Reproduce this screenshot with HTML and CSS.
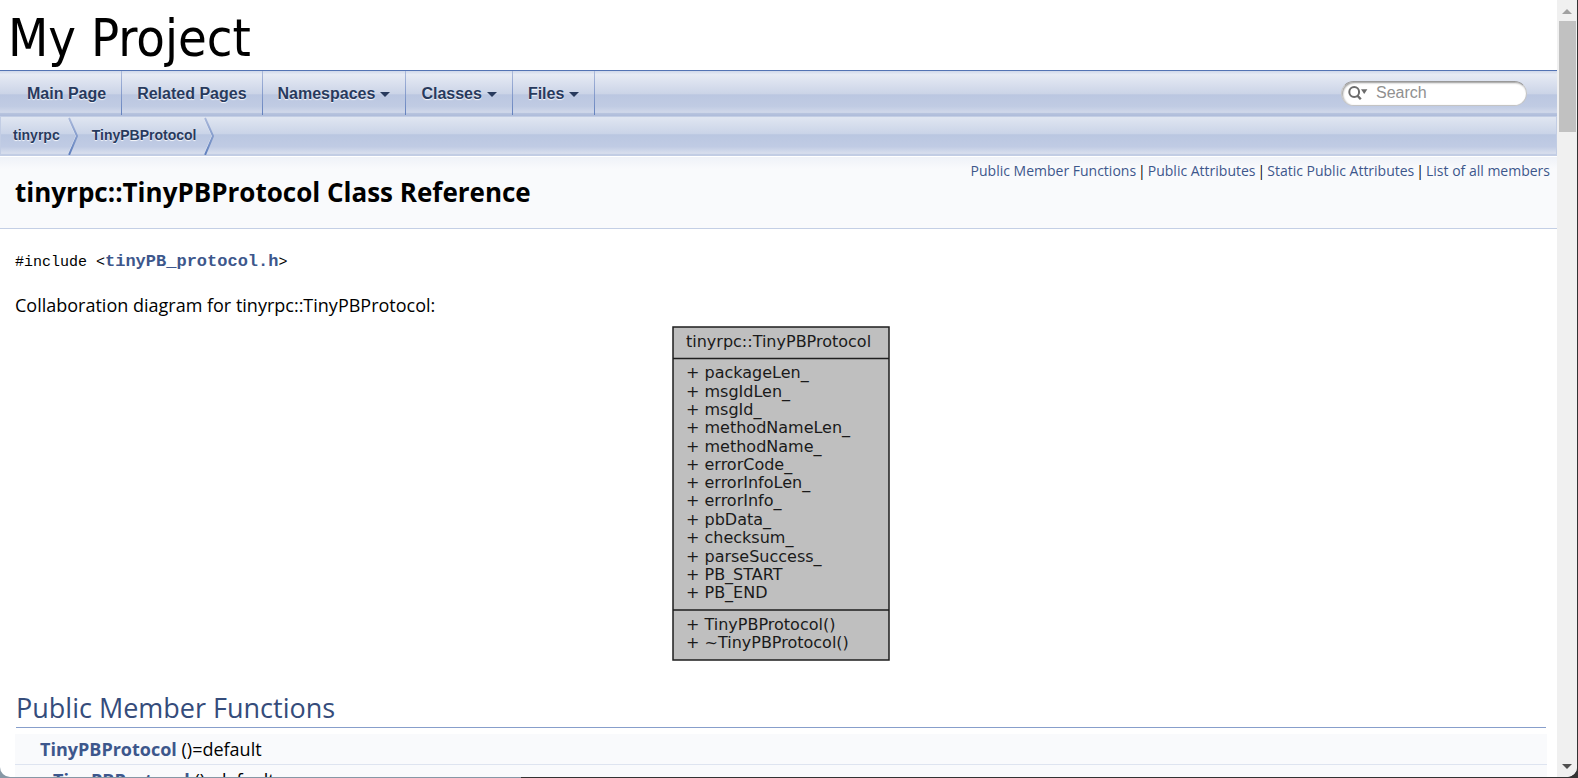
FILE: index.html
```html
<!DOCTYPE html>
<html lang="en">
<head>
<meta charset="utf-8">
<title>My Project: tinyrpc::TinyPBProtocol Class Reference</title>
<link rel="stylesheet" href="styles.css">
</head>
<body>
<div class="window">
  <div class="page">
    <header class="titlearea">My Project</header>
    <nav class="menu">
      <ul class="menu-items">
        <li><a href="#">Main Page</a></li>
        <li><a href="#">Related Pages</a></li>
        <li><a href="#">Namespaces<span class="arrow"></span></a></li>
        <li><a href="#">Classes<span class="arrow"></span></a></li>
        <li><a href="#">Files<span class="arrow"></span></a></li>
      </ul>
      <label class="search">
        <svg width="20" height="16" viewBox="0 0 20 16" aria-hidden="true"><circle cx="6.200" cy="7" r="4.900" fill="none" stroke="#6b6b6b" stroke-width="2"/><path d="M9.500 10.700l3.300 3.600" stroke="#6b6b6b" stroke-width="2.400"/><path d="M13 4.300h6.400l-3.200 4.600z" fill="#6b6b6b"/></svg>
        <input type="text" placeholder="Search" aria-label="Search">
      </label>
    </nav>
    <nav class="navpath">
      <a href="#">tinyrpc</a>
      <svg class="sep" width="10" height="38" viewBox="0 0 10 38" aria-hidden="true"><defs><linearGradient id="g" x1="0" y1="0" x2="0" y2="1"><stop offset="0" stop-color="#a9b8da"/><stop offset="1" stop-color="#5f7fbd"/></linearGradient></defs><path d="M0 1L8 19L0 38" fill="none" stroke="#eef1f8"/><path d="M1 1L9 19L1 38" fill="none" stroke="url(#g)" stroke-width="2"/></svg>
      <a href="#">TinyPBProtocol</a>
      <svg class="sep" width="10" height="38" viewBox="0 0 10 38" aria-hidden="true"><path d="M0 1L8 19L0 38" fill="none" stroke="#eef1f8"/><path d="M1 1L9 19L1 38" fill="none" stroke="url(#g)" stroke-width="2"/></svg>
    </nav>
    <div class="header">
      <h1>tinyrpc::TinyPBProtocol Class Reference</h1>
      <div class="summary"><a href="#">Public Member Functions</a><span>|</span><a href="#">Public Attributes</a><span>|</span><a href="#">Static Public Attributes</a><span>|</span><a href="#">List of all members</a></div>
    </div>
    <main class="contents">
      <code class="include">#include &lt;<a href="#">tinyPB_protocol.h</a>&gt;</code>
      <p class="caption">Collaboration diagram for tinyrpc::TinyPBProtocol:</p>
      <svg class="diagram" width="218" height="335" viewBox="0 0 218 335" role="img" aria-label="Collaboration diagram">
        <rect x="1" y="1" width="216" height="333" fill="#bfbfbf" stroke="#1e1e1e" stroke-width="1.500"/>
        <path d="M1 32.500H217M1 284H217" stroke="#1e1e1e" stroke-width="1.500"/>
        <text x="14" y="21">tinyrpc::TinyPBProtocol</text>
        <text x="14" y="52">+ packageLen_</text>
        <text x="14" y="71">+ msgIdLen_</text>
        <text x="14" y="89">+ msgId_</text>
        <text x="14" y="107">+ methodNameLen_</text>
        <text x="14" y="126">+ methodName_</text>
        <text x="14" y="144">+ errorCode_</text>
        <text x="14" y="162">+ errorInfoLen_</text>
        <text x="14" y="180">+ errorInfo_</text>
        <text x="14" y="199">+ pbData_</text>
        <text x="14" y="217">+ checksum_</text>
        <text x="14" y="236">+ parseSuccess_</text>
        <text x="14" y="254">+ PB_START</text>
        <text x="14" y="272">+ PB_END</text>
        <text x="14" y="304">+ TinyPBProtocol()</text>
        <text x="14" y="322">+ ~TinyPBProtocol()</text>
      </svg>
      <h2>Public Member Functions</h2>
      <table class="members">
        <tr><td class="left"></td><td><a href="#">TinyPBProtocol</a> ()=default</td></tr>
        <tr><td class="left"></td><td class="virtual"><a href="#">TinyPBProtocol</a> ()=default</td></tr>
      </table>
    </main>
  </div>
  <div class="scrollbar"><span class="up"></span><span class="thumb"></span><span class="down"></span></div>
</div>
</body>
</html>
```
FILE: styles.css
```css
* { box-sizing: border-box; }
body {
  margin: 0;
  height: 100vh;
  overflow: hidden;
  background: linear-gradient(90deg, #8797a5 33%, #333 33%);
  font-family: "Open Sans", sans-serif;
  font-size: 18px;
  color: #000;
}
a { color: #3d578c; text-decoration: none; }
.window {
  display: grid;
  grid-template-columns: 1fr 20px;
  height: calc(100vh - 1px);
  margin-right: 1px;
  border-radius: 0 0 10px 10px;
  overflow: hidden;
  background: #fff;
}
.page { overflow: hidden; min-width: 0; }

.titlearea {
  height: 70px;
  padding-left: 8px;
  font-family: "DejaVu Sans Condensed", "Noto Sans", sans-serif;
  font-size: 52px;
  line-height: 76px;
}
.menu {
  display: flex;
  justify-content: space-between;
  align-items: center;
  height: 46px;
  padding: 0 30px 0 12px;
  border-top: 1px solid #5373b4;
  border-bottom: 1px solid #b0bddb;
  background: linear-gradient(#d0d8ea 0, #e6eaf4 8%, #cbd4e7 52%, #bbc7e1 54%, #c0cbe3 80%, #d0d8ea 94%, #b3c0dc 97%);
}
.menu-items { display: flex; height: 100%; margin: 0; padding: 0; list-style: none; }
.menu-items li {
  padding: 0 15px;
  border-right: 1px solid;
  border-image: linear-gradient(#adbbdc, #6280bd) 1;
  font: bold 16px/46px "Liberation Sans", sans-serif;
}
.menu-items a { color: #283a5d; text-shadow: 0 1px 1px rgba(255, 255, 255, .9); }
.arrow {
  display: inline-block;
  margin-left: 5px;
  border: 5px solid transparent;
  border-top-color: #283a5d;
  border-bottom: 0;
  vertical-align: middle;
}
.search {
  display: flex;
  align-items: center;
  gap: 8px;
  width: 186px;
  height: 25px;
  padding-left: 6px;
  border-radius: 13px;
  background: #fff;
  border: 1px solid #c4c4c4;
  border-top-color: #999;
  box-shadow: inset 1px 1px 2px #999;
}
.search input {
  flex: 1;
  min-width: 0;
  padding: 0;
  border: 0;
  outline: 0;
  background: none;
  font: 16px "Liberation Sans", sans-serif;
}
.search input::placeholder { color: #909090; opacity: 1; }

.navpath {
  display: flex;
  align-items: center;
  gap: 8px;
  height: 40px;
  padding-left: 12px;
  border: 1px solid #c2cde4;
  border-bottom: 2px solid #c2cde4;
  background: linear-gradient(#e0e6f1 0, #cad4e8 45%, #bac7e1 48%, #c0cbe4 80%, #d5dcec 96%);
  font: bold 14px/20px "Liberation Sans", sans-serif;
}
.navpath a { padding-bottom: 2px; color: #283a5d; text-shadow: 0 1px 1px rgba(255, 255, 255, .9); }
.sep + a { margin-left: 6px; }

.header {
  display: flex;
  justify-content: space-between;
  height: 73px;
  padding: 0 7px 0 15px;
  border-top: 1px solid #fff;
  border-bottom: 1px solid #c4cfe5;
  background: linear-gradient(#eff2f8, #f9fafc 12px);
}
h1 { margin: 0; font-size: 26px; line-height: 70px; white-space: nowrap; }
.summary { display: flex; gap: 2px; font-size: 14px; line-height: 28px; white-space: nowrap; }

.contents { padding: 23px 10px 0 15px; }
.include { display: block; font: 15px/22px "Liberation Mono", monospace; }
.include a { font-weight: bold; font-size: 17px; line-height: 20px; }
.caption { margin: 18px 0 8px; line-height: 26px; }
.diagram { display: block; margin: 0 auto; font: 16px "DejaVu Sans", sans-serif; fill: #1a1a1a; }
h2 {
  margin: 28px 1px 6px;
  border-bottom: 1px solid #879ecb;
  font-size: 27px;
  font-weight: 400;
  line-height: 38px;
  color: #354c7b;
}
.members { width: 100%; border-collapse: collapse; background: #f9fafc; line-height: 30px; }
.members td { padding: 0; border-bottom: 1px solid #dee4f0; }
.members .left { width: 25px; }
.members .virtual { padding-left: 13px; }
.members a { font-weight: bold; }

.scrollbar {
  display: flex;
  flex-direction: column;
  align-items: center;
  padding: 9px 0 8px;
  background: #f0f0f0;
}
.up { border: 5px solid transparent; border-top: 0; border-bottom-color: #a0a0a0; }
.thumb { width: 17px; height: 111px; margin: 7px 0 auto; background: #c1c1c1; }
.down { border: 5px solid transparent; border-bottom: 0; border-top-color: #505050; }
```
